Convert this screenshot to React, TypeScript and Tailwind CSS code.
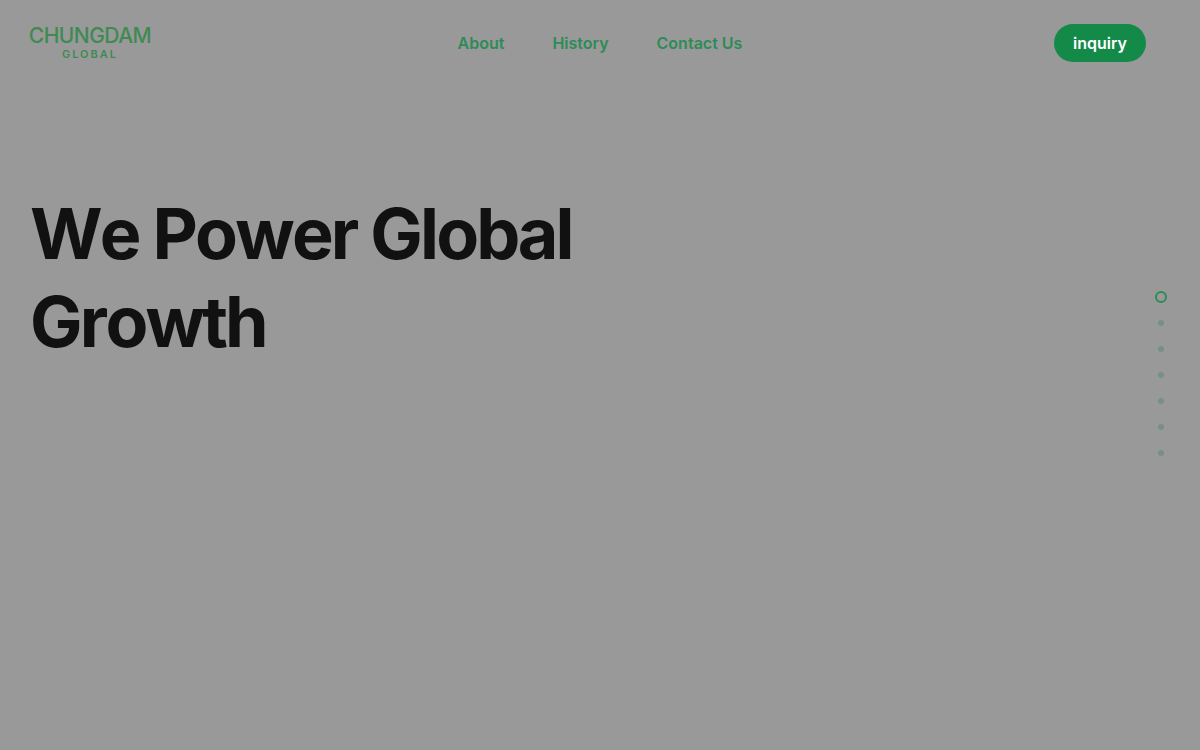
import React, { useState } from "react";

const links = ["About", "History", "Contact Us"];
const sections = ["Intro", "About", "Business", "Brands", "Network", "History", "Contact"];

function Logo() {
  return (
    <a href="#" className="flex w-30 flex-col items-center pt-0.5 text-[#3f8a52]" aria-label="Chungdam Global">
      <span className="text-[21px] leading-5 font-medium tracking-tight">CHUNGDAM</span>
      <span className="text-[11px] leading-4 font-semibold tracking-[2px]">GLOBAL</span>
    </a>
  );
}

export default function App() {
  const [active, setActive] = useState(0);
  return (
    <div className="relative min-h-screen bg-[#999999] font-['Inter',sans-serif]">
      <header className="grid grid-cols-[1fr_auto_1fr] items-center px-[30px] pt-6">
        <Logo />
        <nav className="flex gap-12">
          {links.map((l) => (
            <a key={l} href="#" className="text-base leading-6 font-semibold text-[#2e8b57]">
              {l}
            </a>
          ))}
        </nav>
        <button className="mr-6 h-[38px] justify-self-end rounded-full bg-[#138a48] px-[19px] text-base font-semibold text-white">
          inquiry
        </button>
      </header>
      <main className="px-[30px] pt-32">
        <h1 className="max-w-[600px] text-[70px] leading-[88px] font-bold tracking-[-0.04em] text-[#111111] [font-kerning:none]">
          We Power Global Growth
        </h1>
      </main>
      <ul className="fixed top-1/2 right-[33px] flex -translate-y-1/2 flex-col gap-[14px]">
        {sections.map((s, i) => (
          <li key={s} className="flex">
            <button aria-label={s} onClick={() => setActive(i)} className="flex size-3 items-center justify-center">
              {i === active ? (
                <span className="size-3 rounded-full border-2 border-[#2e8b57]" />
              ) : (
                <span className="size-1.5 rounded-full bg-[#75908a]" />
              )}
            </button>
          </li>
        ))}
      </ul>
    </div>
  );
}
